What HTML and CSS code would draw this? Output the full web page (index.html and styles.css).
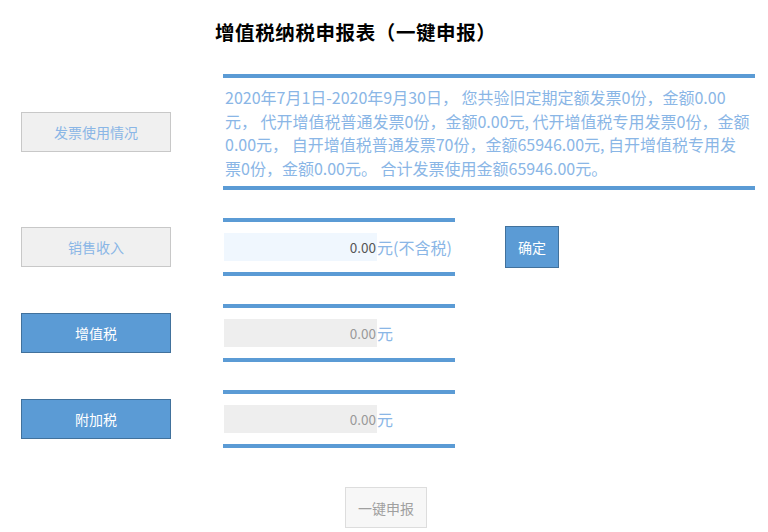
FILE: index.html
```html
<!DOCTYPE html>
<html lang="zh-CN">
<head>
<meta charset="utf-8">
<title>增值税纳税申报表（一键申报）</title>
<link rel="stylesheet" href="styles.css">
</head>
<body>
<div class="page">
  <h1 class="title">增值税纳税申报表（一键申报）</h1>

  <div class="row">
    <button class="label label-light">发票使用情况</button>
    <div class="field field-wide">
      <p class="summary">2020年7月1日-2020年9月30日， 您共验旧定期定额发票0份，金额0.00元， 代开增值税普通发票0份，金额0.00元, 代开增值税专用发票0份，金额0.00元， 自开增值税普通发票70份，金额65946.00元, 自开增值税专用发<br>票0份，金额0.00元。 合计发票使用金额65946.00元。</p>
    </div>
  </div>

  <div class="row">
    <button class="label label-light">销售收入</button>
    <div class="field">
      <div class="input-line">
        <span class="input input-active">0.00</span><span class="unit">元(不含税)</span>
      </div>
    </div>
    <button class="confirm">确定</button>
  </div>

  <div class="row">
    <button class="label label-blue">增值税</button>
    <div class="field">
      <div class="input-line">
        <span class="input input-disabled">0.00</span><span class="unit">元</span>
      </div>
    </div>
  </div>

  <div class="row">
    <button class="label label-blue">附加税</button>
    <div class="field">
      <div class="input-line">
        <span class="input input-disabled">0.00</span><span class="unit">元</span>
      </div>
    </div>
  </div>

  <div class="footer">
    <button class="submit">一键申报</button>
  </div>
</div>
</body>
</html>
```

FILE: styles.css
```css
html, body {
  margin: 0;
  padding: 0;
  background: #ffffff;
}

body {
  font-family: "Noto Sans CJK SC", "Noto Sans", sans-serif;
  color: #333;
}

.page {
  width: 768px;
  padding-top: 20px;
}

.title {
  margin: 0 0 30px 215px;
  font-size: 19.5px;
  line-height: 24px;
  font-weight: bold;
  letter-spacing: 0.6px;
  color: #000;
}

.row {
  display: flex;
  align-items: center;
  margin-top: 28px;
}

.title + .row {
  margin-top: 0;
}

.label {
  box-sizing: border-box;
  width: 150px;
  height: 40px;
  margin: 0 0 0 21px;
  padding: 0;
  font-family: inherit;
  font-size: 14px;
  border: 1px solid #c8c8c8;
  flex: none;
}

.label-light {
  background: #f0f0f0;
  color: #8ab6e6;
}

.label-blue {
  background: #5b9bd5;
  border-color: #41719c;
  color: #ffffff;
}

.field {
  box-sizing: border-box;
  width: 232px;
  margin-left: 52px;
  border-top: 4px solid #5b9bd5;
  border-bottom: 4px solid #5b9bd5;
  padding: 11px 0;
  flex: none;
}

.field-wide {
  width: 532px;
  padding: 8px 2px 6px 2px;
}

.summary {
  margin: 0;
  font-size: 16px;
  line-height: 23.5px;
  color: #8ab6e6;
}

.input-line {
  display: flex;
  align-items: center;
}

.input {
  box-sizing: border-box;
  width: 153px;
  height: 28px;
  margin-left: 1px;
  padding-right: 1px;
  text-align: right;
  font-size: 13.5px;
  line-height: 28px;
}

.input-active {
  background: #f0f7fe;
  color: #555;
}

.input-disabled {
  background: #eeeeee;
  color: #999;
}

.unit {
  font-size: 16px;
  color: #8ab6e6;
}

.confirm {
  box-sizing: border-box;
  width: 54px;
  height: 42px;
  margin-left: 50px;
  padding: 0;
  font-family: inherit;
  font-size: 14px;
  background: #5b9bd5;
  color: #fff;
  border: 1px solid #41719c;
}

.footer {
  margin-top: 39px;
  padding-left: 345px;
}

.submit {
  box-sizing: border-box;
  width: 82px;
  height: 41px;
  padding: 0;
  font-family: inherit;
  font-size: 14px;
  background: #f7f7f7;
  color: #a0a0a0;
  border: 1px solid #dddddd;
}
```
